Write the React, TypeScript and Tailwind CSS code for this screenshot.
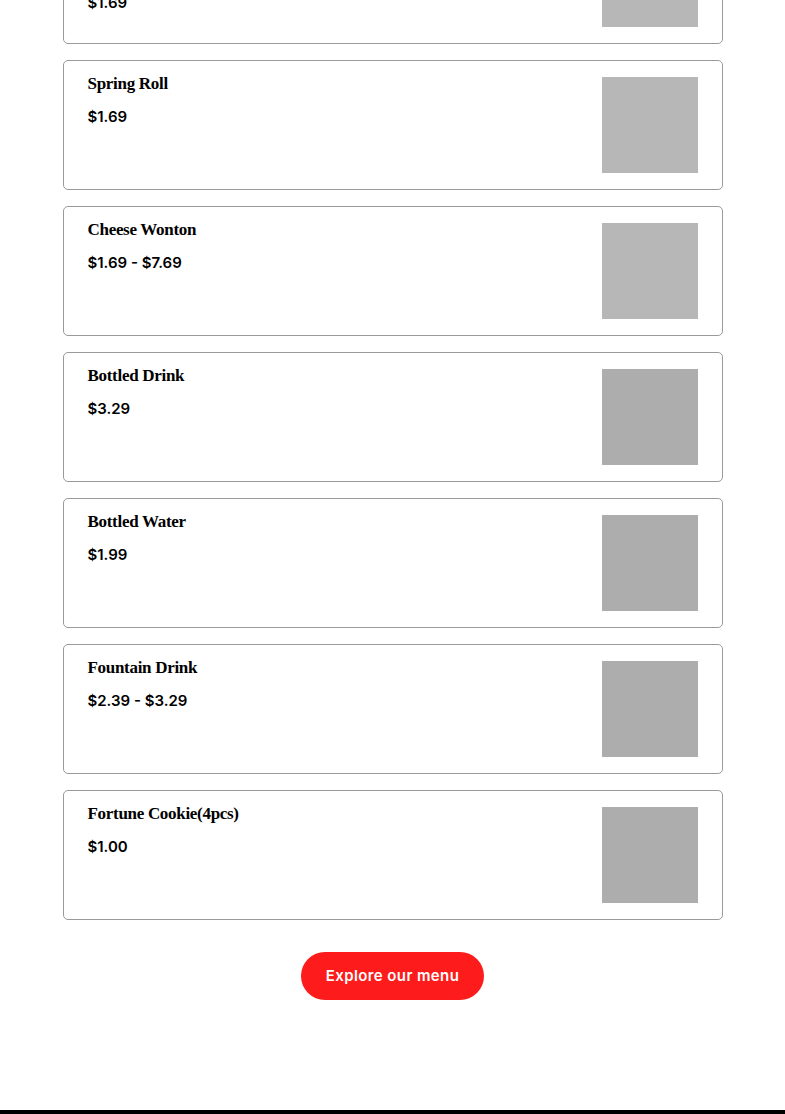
import React from 'react';

type Item = { name: string; price: string; shade: string; note?: string };

const items: Item[] = [
  { name: 'Egg Roll', price: '$1.69', shade: 'bg-[#b7b7b7]', note: 'Crispy vegetable egg roll' },
  { name: 'Spring Roll', price: '$1.69', shade: 'bg-[#b7b7b7]' },
  { name: 'Cheese Wonton', price: '$1.69 - $7.69', shade: 'bg-[#b7b7b7]' },
  { name: 'Bottled Drink', price: '$3.29', shade: 'bg-[#adadad]' },
  { name: 'Bottled Water', price: '$1.99', shade: 'bg-[#adadad]' },
  { name: 'Fountain Drink', price: '$2.39 - $3.29', shade: 'bg-[#adadad]' },
  { name: 'Fortune Cookie(4pcs)', price: '$1.00', shade: 'bg-[#adadad]' },
];

const MenuCard = ({ name, price, shade, note }: Item) => {
  return (
    <div className="flex justify-between border border-[#9a9a9a] rounded-[5px] pt-4 pb-4 pl-6 pr-6 bg-white">
      <div className="flex flex-col -mt-1">
        <h3 className="text-[17px] leading-[22px] font-bold text-black tracking-[-0.3px] [font-family:'Liberation_Serif',serif]">
          {name}
        </h3>
        {note && (
          <p className="mt-[10px] text-[14px] leading-[22px] text-[#444] [font-family:Inter,sans-serif]">{note}</p>
        )}
        <p className="mt-[11px] text-[15px] leading-[22px] font-semibold text-black [font-family:Inter,sans-serif]">
          {price}
        </p>
      </div>
      <div className={`w-24 h-24 shrink-0 ${shade}`}></div>
    </div>
  );
};

export default function App() {
  return (
    <div className="bg-white h-[1114px] flex flex-col overflow-hidden">
      <div className="mx-auto w-[660px] mt-[-86px] flex flex-col gap-4">
        {items.map((it) => (
          <MenuCard key={it.name} {...it} />
        ))}
      </div>

      {/* ปุ่ม */}
      <div className="flex justify-center mt-8">
        <button className="h-12 w-[183px] rounded-full bg-[#fd1b1b] text-white text-[15px] font-semibold tracking-[0.4px] [font-family:Inter,sans-serif]">
          Explore our menu
        </button>
      </div>

      <div className="mt-[110px] h-[200px] shrink-0 bg-black"></div>
    </div>
  );
}
